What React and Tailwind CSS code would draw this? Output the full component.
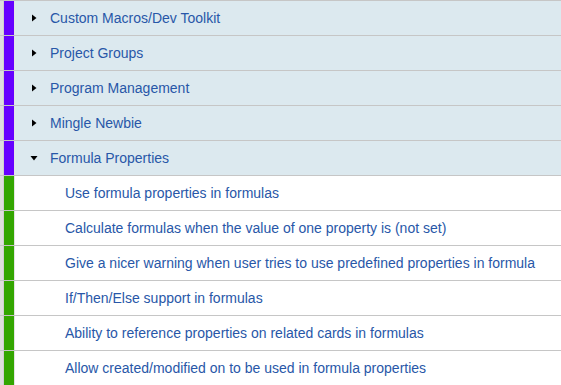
import React from 'react';

const groups = [
  { name: 'Custom Macros/Dev Toolkit', open: false },
  { name: 'Project Groups', open: false },
  { name: 'Program Management', open: false },
  { name: 'Mingle Newbie', open: false },
  { name: 'Formula Properties', open: true },
];

const cards = [
  'Use formula properties in formulas',
  'Calculate formulas when the value of one property is (not set)',
  'Give a nicer warning when user tries to use predefined properties in formula',
  'If/Then/Else support in formulas',
  'Ability to reference properties on related cards in formulas',
  'Allow created/modified on to be used in formula properties',
];

const Row = ({ color, bg, children }) => (
  <div className={`flex h-[35px] border-b border-[#c6c6c6] ${bg}`}>
    <div className="w-[4px] bg-[#dedede] border-r border-[#cfcfcf]" />
    <div className={`w-[10px] ${color}`} />
    <div className="w-[1px] bg-[#e4e4e4]" />
    <div className="flex-1 flex items-center">{children}</div>
  </div>
);

const Triangle = ({ open }) => (
  <svg width="8" height="8" viewBox="0 0 8 8" className="mr-[12px]">
    {open ? <path d="M0.5 2 L7.5 2 L4 6.5 Z" fill="#000" /> : <path d="M2 0.5 L6.5 4 L2 7.5 Z" fill="#000" />}
  </svg>
);

export default function App() {
  return (
    <div className="w-[561px] h-[385px] overflow-hidden bg-white border-t border-[#c6c6c6] font-['Liberation_Sans',Arial,sans-serif] text-[14px] text-[#2857a8]">
      {groups.map((g) => (
        <Row key={g.name} color="bg-[#6600ff]" bg="bg-[#dce9ef]">
          <div className="pl-[15px] flex items-center">
            <Triangle open={g.open} />
            <span>{g.name}</span>
          </div>
        </Row>
      ))}
      {cards.map((c) => (
        <Row key={c} color="bg-[#33a600]" bg="bg-white">
          <span className="pl-[50px]">{c}</span>
        </Row>
      ))}
    </div>
  );
}
